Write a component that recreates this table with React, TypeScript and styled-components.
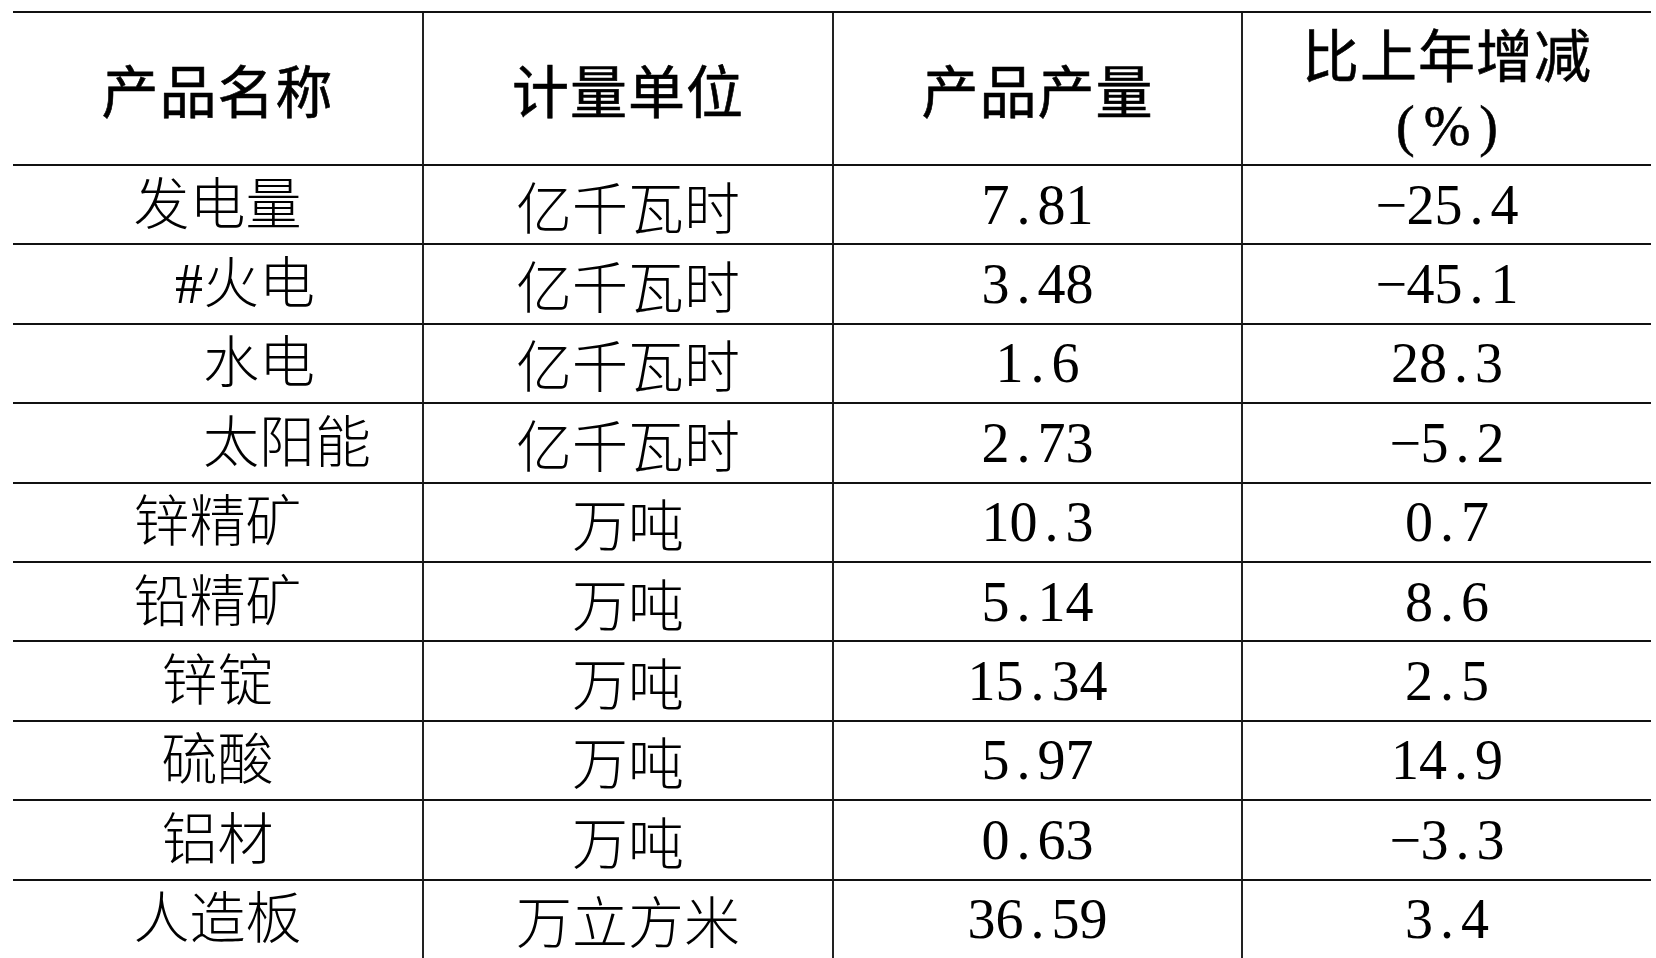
import React from 'react'
import styled, { createGlobalStyle } from 'styled-components'

const GlobalStyle = createGlobalStyle`
  html, body {
    margin: 0;
    padding: 0;
    background: #fff;
    overflow: hidden;
  }
  body {
    font-family: "Liberation Serif", "Noto Sans CJK SC", serif;
    color: #000;
  }
`

type Row = {
  name: string
  indent?: number
  unit: string
  output: string
  change: string
}

const rows: Row[] = [
  { name: '发电量', unit: '亿千瓦时', output: '7.81', change: '-25.4' },
  { name: '#火电', indent: 162, unit: '亿千瓦时', output: '3.48', change: '-45.1' },
  { name: '水电', indent: 190, unit: '亿千瓦时', output: '1.6', change: '28.3' },
  { name: '太阳能', indent: 190, unit: '亿千瓦时', output: '2.73', change: '-5.2' },
  { name: '锌精矿', unit: '万吨', output: '10.3', change: '0.7' },
  { name: '铅精矿', unit: '万吨', output: '5.14', change: '8.6' },
  { name: '锌锭', unit: '万吨', output: '15.34', change: '2.5' },
  { name: '硫酸', unit: '万吨', output: '5.97', change: '14.9' },
  { name: '铝材', unit: '万吨', output: '0.63', change: '-3.3' },
  { name: '人造板', unit: '万立方米', output: '36.59', change: '3.4' },
]

// numbers in the source use half-width monospace: every char takes 0.5em
const Num: React.FC<{ value: string }> = ({ value }) => {
  const chars = value.split('')
  return (
    <NumText>
      {chars.map((c, i) =>
        c === '.' ? <Dot key={i}>.</Dot> : c === '-' ? <Minus key={i}>−</Minus> : <span key={i}>{c}</span>
      )}
    </NumText>
  )
}

const App: React.FC = () => {
  return (
    <Page>
      <GlobalStyle />
      <Table>
        <HeadCell>产品名称</HeadCell>
        <HeadCell>计量单位</HeadCell>
        <HeadCell>产品产量</HeadCell>
        <HeadCell>
          <HeadLines>
            <span>比上年增减</span>
            <Paren>(%)</Paren>
          </HeadLines>
        </HeadCell>
        {rows.map((r) => (
          <React.Fragment key={r.name}>
            <NameCell indent={r.indent}>{r.name}</NameCell>
            <Cell>{r.unit}</Cell>
            <Cell>
              <Num value={r.output} />
            </Cell>
            <Cell>
              <Num value={r.change} />
            </Cell>
          </React.Fragment>
        ))}
      </Table>
    </Page>
  )
}

export default App

const Page = styled.div`
  padding: 11px 0 0 13px;
  width: 1656px;
  box-sizing: border-box;
`
const Table = styled.div`
  display: grid;
  width: 1638px;
  grid-template-columns: 409px 410px 409px 410px;
  grid-template-rows: 153px repeat(10, 79.4px);
  border-top: 2px solid #111;
  & > div:not(:nth-child(4n + 1)) {
    border-left: 2px solid #222;
  }
`
const Cell = styled.div`
  box-sizing: border-box;
  border-bottom: 2px solid #111;
  display: flex;
  align-items: center;
  justify-content: center;
  font-family: "Noto Sans CJK SC", sans-serif;
  font-weight: 300;
  font-size: 56px;
  line-height: 1;
  white-space: nowrap;
`
const NameCell = styled(Cell)<{ indent?: number }>`
  justify-content: ${(p) => (p.indent ? 'flex-start' : 'center')};
  padding-left: ${(p) => (p.indent ? `${p.indent}px` : '0')};
  & {
    font-family: "Liberation Serif", "Noto Sans CJK SC", serif;
  }
`
const HeadCell = styled(Cell)`
  font-weight: 400;
  font-size: 57px;
  letter-spacing: 1px;
  -webkit-text-stroke: 0.6px #000;
`
const HeadLines = styled.div`
  display: flex;
  flex-direction: column;
  align-items: center;
  line-height: 74px;
`
const Paren = styled.span`
  font-family: "Liberation Serif", serif;
  font-weight: 400;
  font-size: 56px;
  letter-spacing: 9px;
  margin-right: -9px;
`
const NumText = styled.span`
  font-family: "Liberation Serif", serif;
  font-weight: 400;
  font-size: 56px;
`
const Dot = styled.span`
  display: inline-block;
  width: 28px;
  text-align: center;
`
const Minus = styled.span`
  display: inline-block;
  width: 31px;
`
